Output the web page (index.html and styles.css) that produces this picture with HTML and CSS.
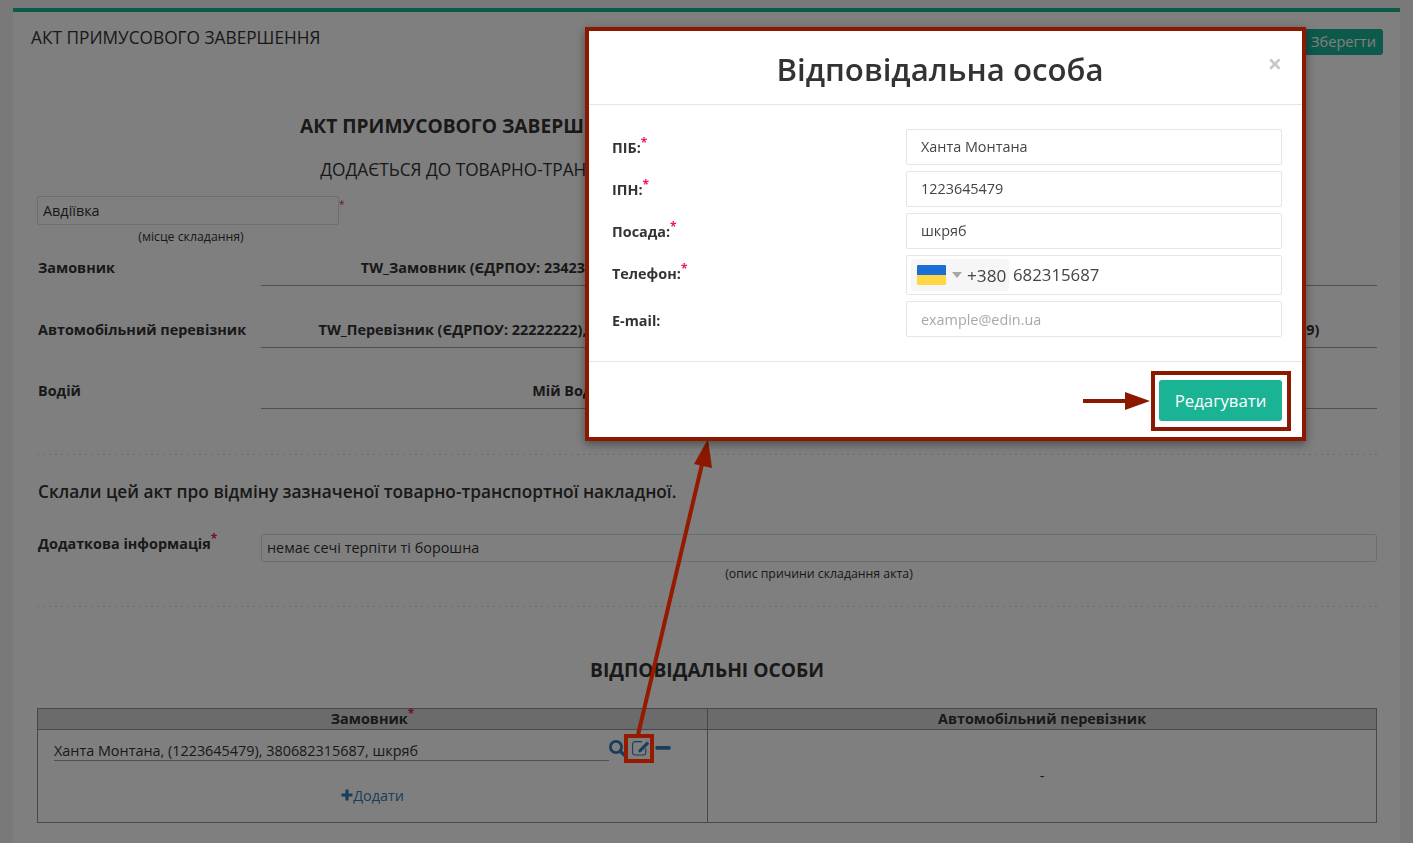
FILE: index.html
```html
<!DOCTYPE html>
<html lang="uk">
<head>
    <meta charset="UTF-8">
    <title>Акт примусового завершення</title>
    <link rel="stylesheet" href="styles.css">
</head>
<body>
    <div class="card">
        <div class="card-head">
            <span class="card-title">АКТ ПРИМУСОВОГО ЗАВЕРШЕННЯ</span>
            <button class="btn-save">Зберегти</button>
        </div>

        <div class="doc">
            <h2 class="doc-title">АКТ ПРИМУСОВОГО ЗАВЕРШЕННЯ ПЕРЕВЕЗЕННЯ ВАНТАЖУ ЗА ЦІЄЮ НАКЛАДНОЮ.</h2>
            <p class="doc-sub">ДОДАЄТЬСЯ ДО ТОВАРНО-ТРАНСПОРТНОЇ НАКЛАДНОЇ РЕЄСТР.: № 1234567 ВІД 01.01.2024 Р.</p>

            <div class="place">
                <div class="place-field">
                    <input class="line-input" value="Авдіївка">
                    <span class="req">*</span>
                </div>
                <div class="hint place-hint">(місце складання)</div>
            </div>

            <div class="party">
                <div class="party-label">Замовник</div>
                <div class="party-value">TW_Замовник (ЄДРПОУ: 23423423), Київська обл., м. Київ, вул. Хрещатик, буд. 1, офіс 251, тел. 380441234567, ІПН 234234232</div>
            </div>
            <div class="party">
                <div class="party-label">Автомобільний перевізник</div>
                <div class="party-value">TW_Перевізник (ЄДРПОУ: 22222222), Київська обл., м. Київ, вул. Велика Васильківська, буд. 10, к. 2, тел. 380441112233, (ІПН 222222229)</div>
            </div>
            <div class="party">
                <div class="party-label">Водій</div>
                <div class="party-value">Мій Водій Іванович, посвідчення ВХХ 123456, тел. 38050123, (ІПН 1234567890)</div>
            </div>

            <div class="dots"></div>

            <p class="statement">Склали цей акт про відміну зазначеної товарно-транспортної накладної.</p>

            <div class="extra">
                <div class="extra-label">Додаткова інформація<span class="req">*</span></div>
                <div class="extra-value">
                    <input class="line-input wide" value="немає сечі терпіти ті борошна">
                    <div class="hint">(опис причини складання акта)</div>
                </div>
            </div>

            <div class="dots dots-low"></div>

            <h3 class="persons-title">ВІДПОВІДАЛЬНІ ОСОБИ</h3>

            <div class="persons">
                <div class="col">
                    <div class="col-head">Замовник<span class="req">*</span></div>
                    <div class="col-body">
                        <div class="person">
                            <span class="person-name">Ханта Монтана, (1223645479), 380682315687, шкряб</span>
                            <span class="person-icons">
                                <svg class="ico" viewBox="0 0 18 18" width="18" height="18"><circle cx="7" cy="8" r="5.6" fill="none" stroke="#337ab7" stroke-width="2.8"/><path d="M11.5 12.5 L16.5 17" stroke="#337ab7" stroke-width="3.4" stroke-linecap="round"/></svg>
                                <svg class="ico" viewBox="0 0 18 18" width="18" height="18"><path d="M10 2.6 H3 a2.4 2.4 0 0 0 -2.4 2.4 v8.6 a2.4 2.4 0 0 0 2.4 2.4 h8.4 a2.4 2.4 0 0 0 2.4 -2.4 v-4.4" fill="none" stroke="#337ab7" stroke-width="1.1"/><path d="M6.8 10.8 L15 2.6 L17.2 4.8 L9 13 L6.4 13.4 Z" fill="#337ab7"/></svg>
                                <svg class="ico" viewBox="0 0 16 18" width="16" height="18"><rect x="0.5" y="7" width="15" height="3.8" rx="1.2" fill="#337ab7"/></svg>
                            </span>
                        </div>
                        <a class="add-link" href="#"><svg viewBox="0 0 12 12" width="12" height="12"><path d="M4.4 0.5 h3.2 v3.9 h3.9 v3.2 h-3.9 v3.9 h-3.2 v-3.9 h-3.9 v-3.2 h3.9 z" fill="#337ab7"/></svg>Додати</a>
                    </div>
                </div>
                <div class="col">
                    <div class="col-head">Автомобільний перевізник</div>
                    <div class="col-body col-empty">-</div>
                </div>
            </div>
        </div>
    </div>

    <div class="backdrop"></div>

    <!-- pointer annotations -->
    <svg class="notes" width="1413" height="843" viewBox="0 0 1413 843">
        <rect x="626" y="736" width="26" height="25" fill="none" stroke="#941a00" stroke-width="4"/>
        <path d="M638 735 L703 460" stroke="#941a00" stroke-width="4" fill="none"/>
        <path d="M708 439 L694 464 L712 468 Z" fill="#8b1800"/>
    </svg>

    <div class="modal">
        <div class="modal-head">
            <h4 class="modal-title">Відповідальна особа</h4>
            <span class="modal-close">×</span>
        </div>
        <div class="modal-body">
            <label class="field-label">ПІБ:<span class="req">*</span></label>
            <input class="field" value="Ханта Монтана">
            <label class="field-label">ІПН:<span class="req">*</span></label>
            <input class="field" value="1223645479">
            <label class="field-label">Посада:<span class="req">*</span></label>
            <input class="field" value="шкряб">
            <label class="field-label label-phone">Телефон:<span class="req">*</span></label>
            <div class="phone">
                <div class="phone-code">
                    <span class="flag"></span>
                    <span class="caret"></span>
                    <span class="phone-prefix">+380</span>
                </div>
                <span class="phone-num">682315687</span>
            </div>
            <label class="field-label label-mail">E-mail:</label>
            <input class="field field-mail" placeholder="example@edin.ua">
        </div>
        <div class="modal-foot">
            <div class="foot-arrow">
                <span class="foot-shaft"></span>
                <span class="foot-head"></span>
            </div>
            <div class="btn-wrap">
                <button class="btn-edit">Редагувати</button>
            </div>
        </div>
    </div>
</body>
</html>
```

FILE: styles.css
```css
* {
    box-sizing: border-box;
}

html, body {
    height: 100%;
}

body {
    margin: 0;
    padding: 8px 13px 0;
    font-family: "Open Sans", sans-serif;
    font-size: 14.4px;
    color: #333;
    background: #f3f3f4;
    overflow: hidden;
}

.req {
    color: #ed1a4f;
    font-weight: 700;
    vertical-align: super;
    font-size: 12px;
    line-height: 0;
}

/* card behind the dialog */
.card {
    width: 1387px;
    min-height: 835px;
    background: #fff;
    border-top: 4px solid #1ab394;
}

.card-head {
    display: flex;
    justify-content: space-between;
    align-items: flex-start;
    height: 43px;
    padding: 14px 17px 0 18px;
}

.card-title {
    font-size: 17.28px;
    line-height: 24px;
}

.btn-save {
    height: 26px;
    margin-top: 3px;
    padding: 0 7px 2px;
    border: none;
    border-radius: 3px;
    background: #1ab394;
    color: #fff;
    font-family: inherit;
    font-size: 14.6px;
}

.doc {
    padding: 0 23px 0 24px;
}

.doc-title {
    margin: 58px 0 0;
    font-size: 19.2px;
    line-height: 26px;
    font-weight: 700;
    text-align: center;
    white-space: nowrap;
}

.doc-sub {
    margin: 20px 0 0;
    font-size: 17.28px;
    line-height: 22px;
    text-align: center;
    white-space: nowrap;
}

.place {
    width: 310px;
    margin-top: 15px;
    margin-bottom: 4px;
}

.place-field {
    display: flex;
}

.place-field .req {
    margin-top: 8px;
    font-size: 10px;
    font-weight: 400;
}

.line-input {
    width: 302px;
    height: 29px;
    padding: 0 5px;
    border: 1px solid #dcdcdc;
    border-radius: 2px;
    background: transparent;
    color: inherit;
    font-family: inherit;
    font-size: 14.4px;
}

.line-input.wide {
    width: 100%;
    height: 28px;
}

.hint {
    font-size: 12.3px;
    line-height: 16px;
    text-align: center;
}

.place-hint {
    width: 308px;
    margin-top: 4px;
}

.party {
    display: flex;
    height: 61.5px;
}

.party-label {
    width: 224px;
    padding-top: 9px;
    padding-left: 1px;
    font-weight: 700;
    white-space: nowrap;
}

.party-value {
    flex: 1;
    height: 37px;
    padding-top: 9px;
    border-bottom: 1px solid #a0a0a0;
    font-weight: 700;
    text-align: center;
    white-space: nowrap;
}

.dots {
    height: 1px;
    margin-top: 20px;
    background: repeating-linear-gradient(to right, #d4d4d4 0 2px, transparent 2px 6px);
}

.dots-low {
    margin-top: 24px;
}

.statement {
    margin: 25px 0 0;
    padding-left: 1px;
    font-size: 17.28px;
    line-height: 24px;
    font-weight: 600;
}

.extra {
    display: flex;
    margin-top: 30px;
}

.extra-label {
    width: 224px;
    padding-left: 1px;
    font-weight: 700;
    white-space: nowrap;
}

.extra-value {
    flex: 1;
}

.extra-value .hint {
    margin-top: 4px;
}

.persons-title {
    margin: 50px 0 0;
    font-size: 19.2px;
    line-height: 26px;
    font-weight: 700;
    text-align: center;
}

.persons {
    display: flex;
    margin-top: 25px;
    border: 1px solid #909090;
    height: 115px;
}

.col {
    width: 50%;
}

.col + .col {
    border-left: 1px solid #909090;
}

.col-head {
    height: 21px;
    border-bottom: 1px solid #909090;
    background: #d6d6d6;
    font-weight: 700;
    line-height: 20px;
    text-align: center;
}

.col-body {
    padding: 10px 16px 0;
}

.col-empty {
    padding-top: 36px;
    text-align: center;
}

.person {
    display: flex;
    align-items: flex-start;
}

.person-name {
    width: 555px;
    height: 21px;
    border-bottom: 1px solid #a0a0a0;
    line-height: 21px;
}

.person-icons {
    display: flex;
    gap: 5px;
    margin-top: -1px;
}

.add-link {
    display: flex;
    align-items: center;
    justify-content: center;
    margin-top: 25px;
    color: #337ab7;
    text-decoration: none;
}

.backdrop {
    position: fixed;
    inset: 0;
    background: rgba(0, 0, 0, 0.5);
}

.notes {
    position: absolute;
    top: 0;
    left: 0;
}

/* dialog */
.modal {
    position: absolute;
    top: 27px;
    left: 585px;
    width: 721px;
    height: 414px;
    border: 4px solid #8b1800;
    background: #fff;
    box-shadow: 0 3px 9px rgba(0, 0, 0, 0.4);
}

.modal-head {
    position: relative;
    height: 74px;
    border-bottom: 1px solid #e5e5e5;
}

.modal-title {
    margin: 0;
    padding-right: 11px;
    font-size: 31.2px;
    line-height: 76px;
    font-weight: 600;
    text-align: center;
    color: #333;
}

.modal-close {
    position: absolute;
    top: 18px;
    right: 20px;
    font-size: 25px;
    line-height: 28px;
    font-weight: 700;
    color: #c8c8c8;
}

.modal-body {
    display: grid;
    grid-template-columns: 294px 376px;
    row-gap: 6px;
    align-items: center;
    align-content: start;
    height: 257px;
    padding: 24px 0 0 23px;
    border-bottom: 1px solid #e5e5e5;
}

.field-label {
    font-weight: 700;
    color: #333;
}

.label-phone {
    margin-bottom: 4px;
}

.label-mail {
    margin-top: 2px;
}

.field {
    width: 100%;
    height: 36px;
    padding: 0 14px 2px;
    border: 1px solid #e5e6e7;
    border-radius: 2px;
    font-family: inherit;
    font-size: 14.4px;
    color: #444;
}

.field-mail {
    padding-bottom: 0;
}

.field::placeholder {
    color: #a8a8a8;
    opacity: 1;
}

.phone {
    display: flex;
    align-items: center;
    height: 40px;
    padding-left: 4px;
    border: 1px solid #e5e6e7;
    border-radius: 2px;
    font-size: 16.8px;
    color: #444;
}

.phone-code {
    display: flex;
    align-items: center;
    width: 98px;
    height: 32px;
    padding-left: 6px;
    border-radius: 4px;
    background: #f6f6f6;
    white-space: nowrap;
}

.phone-prefix {
    font-size: 17.2px;
}

.flag {
    width: 29px;
    height: 20px;
    border-radius: 1px;
    background: linear-gradient(#1a6fd6 50%, #ffd744 50%);
}

.caret {
    width: 0;
    height: 0;
    margin: 0 5px 0 6px;
    border-left: 5px solid transparent;
    border-right: 5px solid transparent;
    border-top: 6px solid #a8a8a8;
}

.phone-num {
    margin-left: 4px;
    padding-bottom: 2px;
}

.modal-foot {
    display: flex;
    justify-content: flex-end;
    align-items: center;
    height: 75px;
    padding: 2px 20px 0 0;
}

.foot-arrow {
    display: flex;
    align-items: center;
    margin-right: 9px;
}

.foot-shaft {
    width: 42px;
    height: 4px;
    background: #8b1800;
}

.foot-head {
    width: 0;
    height: 0;
    border-top: 9px solid transparent;
    border-bottom: 9px solid transparent;
    border-left: 25px solid #8b1800;
}

.btn-wrap {
    position: relative;
}

.btn-wrap::after {
    content: "";
    position: absolute;
    inset: -9px -9px -10px -8px;
    border: 4px solid #8b1800;
}

.btn-edit {
    display: block;
    width: 123px;
    height: 41px;
    border: none;
    border-radius: 3px;
    background: #1ab394;
    color: #fff;
    font-family: inherit;
    font-size: 16.8px;
}
```
